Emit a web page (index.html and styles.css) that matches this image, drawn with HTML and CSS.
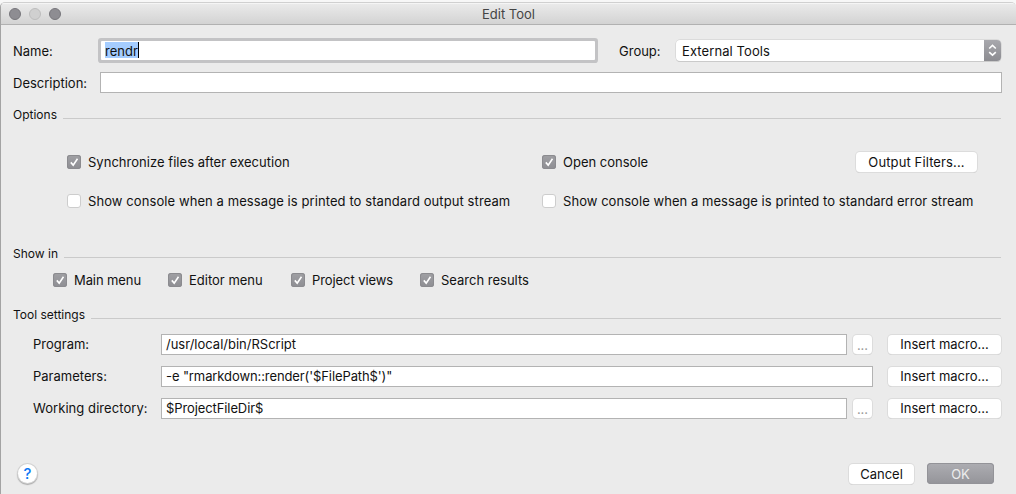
FILE: index.html
```
<!DOCTYPE html>
<html lang="en">
<head>
<meta charset="utf-8">
<title>Edit Tool</title>
<link rel="stylesheet" href="styles.css">
</head>
<body>
<svg class="defs" width="0" height="0"><symbol id="check" viewBox="0 0 14 14"><path class="check-mark" d="M3.8 7.4 6.2 10.1 10.5 3.7"/></symbol></svg>
<main class="window">
  <header class="titlebar">
    <div class="lights"><i class="light"></i><i class="light light-off"></i><i class="light"></i></div>
    <h1 class="title">Edit Tool</h1>
  </header>
  <div class="row name-row">
    <label class="label w-name">Name:</label>
    <div class="field focused"><span class="selected">rendr</span></div>
    <label class="label group-label">Group:</label>
    <div class="select"><span class="select-text">External Tools</span>
      <svg class="stepper" viewBox="0 0 17 21"><path d="M5.2 8.5 8.5 5.4 11.8 8.5M5.2 12.1 8.5 15.2 11.8 12.1"/></svg>
    </div>
  </div>
  <div class="row desc-row">
    <label class="label w-name">Description:</label>
    <div class="field"></div>
  </div>
  <div class="legend l-options"><span>Options</span></div>
  <div class="options">
    <div class="check"><svg class="box on"><use href="#check"/></svg><span class="t-sync">Synchronize files after execution</span></div>
    <div class="check"><svg class="box on"><use href="#check"/></svg><span>Open console</span></div>
    <button class="btn filters">Output Filters...</button>
    <div class="check"><i class="box"></i><span class="t-out">Show console when a message is printed to standard output stream</span></div>
    <div class="check wide"><i class="box"></i><span class="t-err">Show console when a message is printed to standard error stream</span></div>
  </div>
  <div class="legend l-show"><span>Show in</span></div>
  <div class="show">
    <div class="check"><svg class="box on"><use href="#check"/></svg><span class="t-main">Main menu</span></div>
    <div class="check"><svg class="box on"><use href="#check"/></svg><span>Editor menu</span></div>
    <div class="check"><svg class="box on"><use href="#check"/></svg><span class="t-views">Project views</span></div>
    <div class="check"><svg class="box on"><use href="#check"/></svg><span>Search results</span></div>
  </div>
  <div class="legend l-tool"><span>Tool settings</span></div>
  <div class="settings">
    <div class="row"><label class="label w-set">Program:</label><div class="field"><span>/usr/local/bin/RScript</span></div><button class="btn dots">...</button><button class="btn macro">Insert macro...</button></div>
    <div class="row"><label class="label w-set">Parameters:</label><div class="field"><span class="t-par">-e "rmarkdown::render('$FilePath$')"</span></div><button class="btn macro">Insert macro...</button></div>
    <div class="row"><label class="label w-set t-work">Working directory:</label><div class="field"><span class="t-dir">$ProjectFileDir$</span></div><button class="btn dots">...</button><button class="btn macro">Insert macro...</button></div>
  </div>
  <footer class="footer">
    <button class="help">?</button>
    <button class="btn cancel">Cancel</button>
    <button class="btn ok">OK</button>
  </footer>
</main>
</body>
</html>
```
FILE: styles.css
```
* { box-sizing: border-box; }
body { margin: 0; background: #f7f7f7; overflow: hidden; }
.defs { display: block; }
.window {
  height: 492px; margin-top: 2px; border-left: 1px solid #a3a3a3; border-top: 1px solid #d0d0d0;
  border-radius: 5px 5px 0 0; background: #ebebeb; overflow: hidden;
  font: 13px/16px Inter, "Liberation Sans", sans-serif; color: #111; white-space: nowrap;
}
.titlebar { display: grid; grid-template-columns: 200px 1fr 200px; height: 22px; background: linear-gradient(#ebebeb, #d3d3d3); border-bottom: 1px solid #b1b1b1; box-shadow: inset 0 1px #f5f5f5; }
.lights { display: flex; gap: 8px; padding: 5px 0 0 8px; }
.light { width: 12px; height: 12px; border-radius: 50%; background: #8e8d92; border: 1px solid #77767b; }
.light-off { background: #d0d0d0; border-color: #bdbdbd; }
.title { margin: 0; padding-top: 3px; text-align: center; font-size: 13px; font-weight: 400; color: #444; }
.row { display: flex; align-items: center; height: 21px; }
.name-row { margin: 15px 15px 0 12px; }
.desc-row { margin: 11px 14px 0 12px; }
.label { flex: none; }
.w-name { width: 87px; }
.field { flex: 1; height: 21px; padding: 2px 4px 0; background: #fff; border: 1px solid #b3b3b3; }
.focused { flex: none; width: 494px; height: 19px; padding: 1px 4px; margin-left: 1px; border: 0; box-shadow: 0 0 0 3px #c3c3c5; border-radius: 1px; }
.selected { display: block; width: 34px; height: 16px; line-height: 18px; background: #a5cdff; border-right: 1px solid #000; }
.group-label { margin-left: 24px; width: 57px; }
.select { display: flex; flex: 1; height: 21px; padding-left: 6px; align-items: center; justify-content: space-between; background: #fff; border-radius: 4px; box-shadow: 0 0 0 .5px #ccc, 0 1px #c8c8c8; overflow: hidden; }
.select-text { letter-spacing: .09px; }
.stepper { width: 17px; height: 21px; background: linear-gradient(#a8a8ad, #8c8c91); fill: none; stroke: #fff; stroke-width: 1.6; }
.legend { display: flex; height: 16px; margin: 0 15px 0 12px; font-size: 12px; }
.legend::after { content: ""; flex: 1; height: 1px; margin: 11px 0 0 6px; background: #cacaca; }
.l-options { margin-top: 14px; }
.options { display: grid; grid-template-columns: 475px 314px 123px; grid-template-rows: 14px 14px; row-gap: 25px; height: 53px; margin: 32px 0 0 66px; }
.check { display: flex; align-items: center; gap: 7px; height: 14px; }
.wide { grid-column: span 2; }
.t-sync { letter-spacing: .03px; }
.t-out { letter-spacing: .085px; }
.t-err { letter-spacing: .05px; }
.t-main { letter-spacing: -.1px; }
.t-views { letter-spacing: -.08px; }
.t-par { letter-spacing: -.1px; }
.t-dir { letter-spacing: -.1px; }
.t-work { letter-spacing: .06px; }
.box { flex: none; width: 14px; height: 14px; border-radius: 3px; background: #fff; border: 1px solid #cdcdcd; }
.box.on { border: 0; background: linear-gradient(#a0a0a4, #8e8e93); box-shadow: inset 0 0 0 1px #8b8b8f; }
.check-mark { fill: none; stroke: #fff; stroke-width: 1.6; }
.btn { flex: none; height: 20px; padding: 0; border: 0; border-radius: 4px; background: #fff; box-shadow: 0 0 0 1px #dcdcdc, 0 1px #c4c4c4; font: inherit; color: inherit; }
.filters { width: 121px; margin-top: -3px; letter-spacing: .12px; }
.l-show { margin-top: 38px; }
.show { display: flex; height: 14px; margin: 11px 0 0 52px; }
.show .check:nth-child(1) { width: 115px; }
.show .check:nth-child(2) { width: 123px; }
.show .check:nth-child(3) { width: 129px; }
.l-tool { margin-top: 20px; }
.settings { display: flex; flex-direction: column; gap: 11px; margin: 11px 15px 0 32px; }
.settings .label { padding-bottom: 1px; }
.settings .field { padding-top: 1px; }
.settings .btn { height: 19px; margin-bottom: 1px; }
.w-set { width: 128px; }
.settings .dots { width: 19px; margin-left: 6px; margin-right: 1px; color: #999; line-height: 20px; }
.macro { width: 113px; margin-left: 15px; }
.footer { display: flex; align-items: center; margin: 44px 22px 0 17px; height: 21px; }
.help { width: 19px; height: 19px; margin-right: auto; padding: 0; border: 0; border-radius: 50%; background: #fff; box-shadow: 0 0 0 1px #d2d2d2, 0 1px 1px 1px #aaa; font: 500 15px/19px Inter, sans-serif; color: #0a78f5; }
.cancel { width: 65px; margin-right: 13px; }
.ok { width: 67px; height: 21px; background: linear-gradient(#adadb2, #949499); box-shadow: inset 0 0 0 1px #939398; color: #ededed; }
```
